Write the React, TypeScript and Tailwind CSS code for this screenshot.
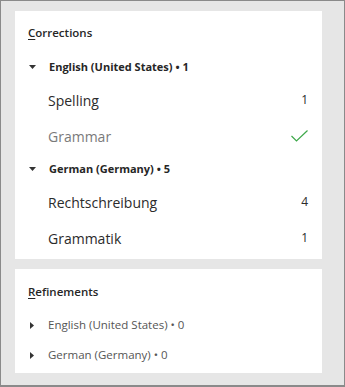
import React from "react";

const font = { fontFamily: '"Open Sans", "Noto Sans", Arial, sans-serif' };

function Down() {
  return (
    <svg width="7" height="4" viewBox="0 0 7 4" className="shrink-0">
      <path d="M0 0H7L3.5 4Z" fill="#333" />
    </svg>
  );
}
function Right() {
  return (
    <svg width="4" height="7" viewBox="0 0 4 7" className="shrink-0">
      <path d="M0 0V7L4 3.5Z" fill="#333" />
    </svg>
  );
}
function Check() {
  return (
    <svg width="17" height="12" viewBox="0 0 17 12">
      <path d="M0.5 6L5.5 11L16.5 0.5" fill="none" stroke="#3ea84a" strokeWidth="1.2" />
    </svg>
  );
}

function Item({ label, value, muted }: { label: string; value: React.ReactNode; muted?: boolean }) {
  return (
    <div className="flex h-[36px] items-center justify-between pl-[33px] pr-[14px]">
      <span className={`text-[14px] ${muted ? "text-[#7a7a7a]" : "text-[#2b2b2b]"}`}>{label}</span>
      <span className="text-[12px] text-[#2b2b2b]">{value}</span>
    </div>
  );
}

export default function App() {
  return (
    <div
      style={font}
      className="h-[387px] w-[345px] border border-b-2 border-[#8a8a8a] bg-[#e6e6e6] pl-[14px] pr-[22px] pt-[10px]"
    >
      <div className="flex flex-col bg-white pl-[13px] pt-[11px] pb-[3px]">
        <div className="flex h-[22px] items-center text-[11.5px] font-semibold text-[#262626]">
          <span><span className="underline underline-offset-2">C</span>orrections</span>
        </div>
        <div className="mt-[8px] flex h-[30px] items-center gap-[13px] pl-[1px] text-[11px] font-bold text-[#262626]">
          <Down />
          <span>English (United States) • 1</span>
        </div>
        <div className="-ml-[13px]">
          <Item label="Spelling" value="1" />
          <Item label="Grammar" value={<Check />} muted />
        </div>
        <div className="flex h-[30px] items-center gap-[13px] pl-[1px] text-[11px] font-bold text-[#262626]">
          <Down />
          <span>German (Germany) • 5</span>
        </div>
        <div className="-ml-[13px]">
          <Item label="Rechtschreibung" value="4" />
          <Item label="Grammatik" value="1" />
        </div>
      </div>
      <div className="mt-[10px] flex flex-col bg-white pl-[13px] pt-[12px] pb-[3px]">
        <div className="flex h-[22px] items-center text-[11.5px] font-semibold text-[#262626]">
          <span><span className="underline underline-offset-2">R</span>efinements</span>
        </div>
        <div className="mt-[7px] flex h-[30px] items-center gap-[14px] pl-[2px] text-[11.5px] text-[#555]">
          <Right />
          <span>English (United States) • 0</span>
        </div>
        <div className="flex h-[30px] items-center gap-[14px] pl-[2px] text-[11.5px] text-[#555]">
          <Right />
          <span>German (Germany) • 0</span>
        </div>
      </div>
    </div>
  );
}
